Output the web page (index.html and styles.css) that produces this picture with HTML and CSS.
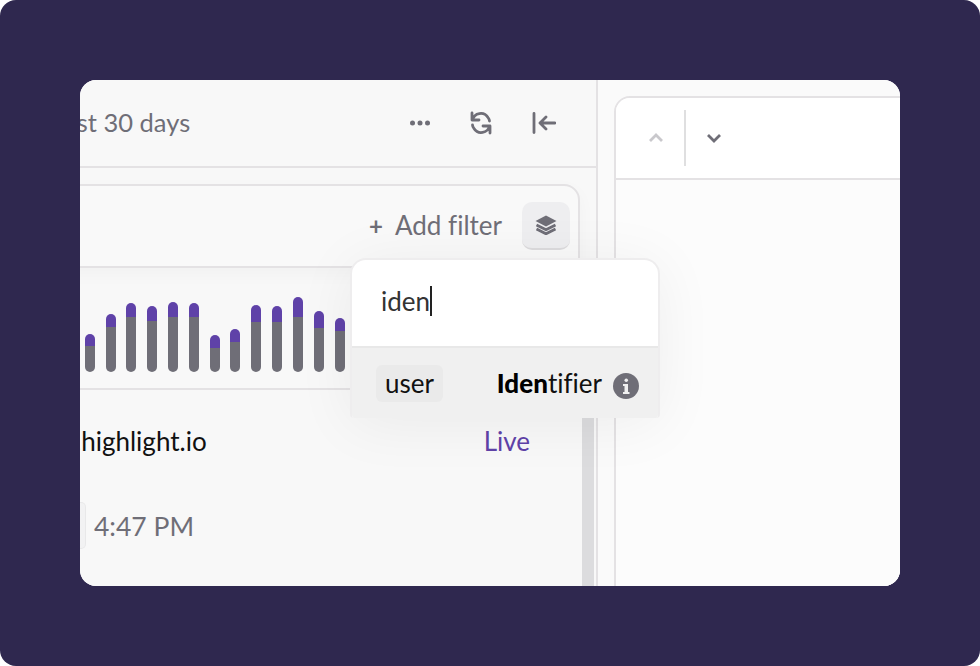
FILE: index.html
```html
<!DOCTYPE html>
<html lang="en">
<head>
<meta charset="utf-8">
<title>Session filters</title>
<link rel="stylesheet" href="styles.css">
</head>
<body>
<div class="frame">
  <div class="window">
    <section class="left">
      <header class="topbar">
        <span class="range">Last 30 days</span>
        <div class="tools">
          <svg class="ic-more" viewBox="0 0 20 6" width="20" height="6"><circle cx="2.500" cy="3" r="2.500"/><circle cx="10" cy="3" r="2.500"/><circle cx="17.500" cy="3" r="2.500"/></svg>
          <svg class="ic-refresh" viewBox="0 0 22 24" width="22" height="24"><path d="M2 2v7h7M2.500 9A8.500 8.500 0 0 1 18 6.500q1.500 2 1.500 3.500M20 22v-7h-7M19.500 15A8.500 8.500 0 0 1 4 17.500q-1.500-2-1.500-3.500"/></svg>
          <svg class="ic-collapse" viewBox="0 0 24 24" width="24" height="24"><path d="M2 2.500v19M23 12H8M14 6l-6 6 6 6"/></svg>
        </div>
      </header>
      <div class="content">
        <div class="filter-card">
          <div class="filter-row">
            <span class="add"><span class="plus">+</span>Add filter</span>
            <button class="layers" type="button">
              <svg viewBox="0 0 22 20" width="22" height="20"><path class="solid" d="M11 .5 21.500 6 11 11.500 .5 6z"/><path class="line" d="M1.500 10l9.500 4.800 9.500-4.800M1.500 14l9.500 4.800 9.500-4.800"/></svg>
            </button>
          </div>
        </div>
        <div class="chart">
          <i class="bar" style="--p:12px;--g:26px"></i>
          <i class="bar" style="--p:13px;--g:45px"></i>
          <i class="bar" style="--p:14px;--g:55px"></i>
          <i class="bar" style="--p:15px;--g:51px"></i>
          <i class="bar" style="--p:15px;--g:55px"></i>
          <i class="bar" style="--p:14px;--g:55px"></i>
          <i class="bar" style="--p:13px;--g:24px"></i>
          <i class="bar" style="--p:13px;--g:30px"></i>
          <i class="bar" style="--p:17px;--g:50px"></i>
          <i class="bar" style="--p:16px;--g:50px"></i>
          <i class="bar" style="--p:20px;--g:55px"></i>
          <i class="bar" style="--p:17px;--g:44px"></i>
          <i class="bar" style="--p:13px;--g:41px"></i>
        </div>
        <div class="row-main">
          <span class="host">app.highlight.io</span>
          <span class="live">Live</span>
        </div>
        <div class="row-time">
          <span class="chip"></span>
          <span class="time">4:47 PM</span>
        </div>
      </div>
      <div class="scrollbar"></div>
    </section>
    <section class="right">
      <div class="panel">
        <div class="pager">
          <svg class="chev off" viewBox="0 0 16 10" width="16" height="10"><path d="M2 8l6-6 6 6"/></svg>
          <span class="divider"></span>
          <svg class="chev" viewBox="0 0 16 10" width="16" height="10"><path d="M2 2l6 6 6-6"/></svg>
        </div>
      </div>
    </section>
    <div class="popup">
      <div class="search"><span class="typed">iden</span><span class="caret"></span></div>
      <div class="option">
        <span class="tag">user</span>
        <span class="name"><b>Iden</b>tifier</span>
        <svg class="info" viewBox="0 0 26 26" width="26" height="26"><circle cx="13" cy="13" r="13"/><rect class="glyph" x="11.500" y="5.500" width="3.500" height="3.500" rx="1.700"/><path class="glyph" d="M10 11h5v8h1.500v2h-6.500v-2h1.500v-6h-1.500z"/></svg>
      </div>
    </div>
  </div>
</div>
</body>
</html>
```

FILE: styles.css
```css
* { box-sizing: border-box; }
html, body { margin: 0; padding: 0; background: #fff; }
body { width: 980px; height: 666px; overflow: hidden; font-family: "Lato", "Noto Sans", sans-serif; font-variant-ligatures: none; }
.frame { width: 980px; height: 666px; padding: 80px; background: #2f284f; border-radius: 16px; }
.window { position: relative; display: flex; width: 820px; height: 506px; background: #f9f9f9; border-radius: 16px; overflow: hidden; }
.left { position: relative; flex: 0 0 518px; height: 506px; border-right: 2px solid #e4e2e4; background: #f8f8f8; }
.topbar { display: flex; align-items: center; justify-content: flex-end; height: 88px; border-bottom: 2px solid #e4e2e4; padding: 0 40px 0 0; overflow: hidden; }
.range { margin-right: auto; margin-left: -29px; padding-bottom: 2px; font-size: 25.500px; color: #6f6e77; white-space: nowrap; }
.tools { display: flex; align-items: center; gap: 40px; margin-top: -1px; }
.tools svg { display: block; }
.ic-more { fill: #6f6e77; }
.ic-refresh, .ic-collapse { fill: none; stroke: #6f6e77; stroke-width: 2.800; stroke-linecap: round; stroke-linejoin: round; }
.content { padding-top: 16px; }
.filter-card { width: 520px; margin-left: -20px; height: 84px; border: 2px solid #e4e2e4; border-radius: 0 16px 0 0; background: #f9f9f9; box-shadow: 0 6px 18px rgba(0,0,0,.03); }
.filter-row { display: flex; align-items: center; justify-content: flex-end; height: 80px; padding-right: 8px; }
.add { display: flex; align-items: center; font-size: 26px; color: #6f6e77; margin-right: 20px; padding-bottom: 2px; }
.plus { font-size: 24px; font-weight: 700; margin-right: 12px; }
.layers { display: flex; align-items: center; justify-content: center; width: 48px; height: 48px; padding: 0; border: 0; border-bottom: 2px solid #dcdbdd; border-radius: 10px; background: #eeeef0; }
.solid { fill: #6f6e77; }
.line { fill: none; stroke: #6f6e77; stroke-width: 2.800; }
.chart { display: flex; align-items: flex-end; gap: 10.830px; width: 516px; height: 120px; margin-top: 2px; padding: 0 0 16px 4.700px; border-bottom: 2px solid #e4e2e4; }
.bar { display: block; flex: 0 0 10px; height: calc(var(--p) + var(--g)); border-radius: 5px; background: linear-gradient(#5f42a8 var(--p), #6f6e77 var(--p)); }
.row-main { display: flex; justify-content: space-between; align-items: center; width: 450px; margin-top: 33px; font-size: 26px; line-height: 36px; }
.host { margin-left: -47px; color: #111; }
.live { color: #5f42a8; }
.row-time { display: flex; align-items: center; gap: 8px; margin-top: 43px; }
.chip { display: block; width: 6px; height: 47px; background: #f2f2f3; border: 1px solid #e8e8e9; border-left: 0; border-radius: 0 5px 5px 0; }
.time { font-size: 26.500px; color: #6f6e77; }
.scrollbar { position: absolute; top: 0; right: 2px; width: 12px; height: 506px; background: #dcdcde; clip-path: inset(338px 0 0 0); }
.right { flex: 1; padding: 16px 0 0 16px; background: #fafafa; }
.panel { height: 520px; margin-right: -20px; background: #fcfcfc; border: 2px solid #e4e2e4; border-radius: 16px 0 0 0; }
.pager { display: flex; align-items: center; height: 82px; padding-left: 32px; border-bottom: 2px solid #e4e2e4; background: #fff; border-radius: 14px 0 0 0; }
.divider { display: block; width: 2px; height: 56px; margin: 0 20px; background: #dfdfe0; }
.chev { fill: none; stroke: #6f6e77; stroke-width: 2.800; }
.chev.off { stroke: #c9c8cc; }
.popup { position: absolute; left: 270px; top: 178px; width: 310px; height: 160px; border: 2px solid #eeedee; border-bottom: 0; border-radius: 16px 16px 4px 4px; background: #fff; overflow: hidden; box-shadow: 0 6px 60px rgba(0,0,0,.06); z-index: 2; }
.search { display: flex; align-items: center; height: 88px; padding: 0 0 4px 29px; font-size: 26px; color: #333; border-bottom: 2px solid #e8e8e8; }
.caret { display: block; width: 2px; height: 30px; background: #222; }
.option { display: flex; align-items: center; height: 70px; padding: 0 19px 0 24px; background: #f0f0f0; }
.tag { padding: 2px 9px 3px; font-size: 26px; line-height: 32px; color: #111; background: #eaeaea; border-radius: 6px; }
.name { margin-left: auto; font-size: 26px; color: #111; }
.name b { font-weight: 900; color: #000; }
.info { margin-left: 11px; margin-top: 5px; fill: #6f6e77; }
.glyph { fill: #f0f0f0; }
```
